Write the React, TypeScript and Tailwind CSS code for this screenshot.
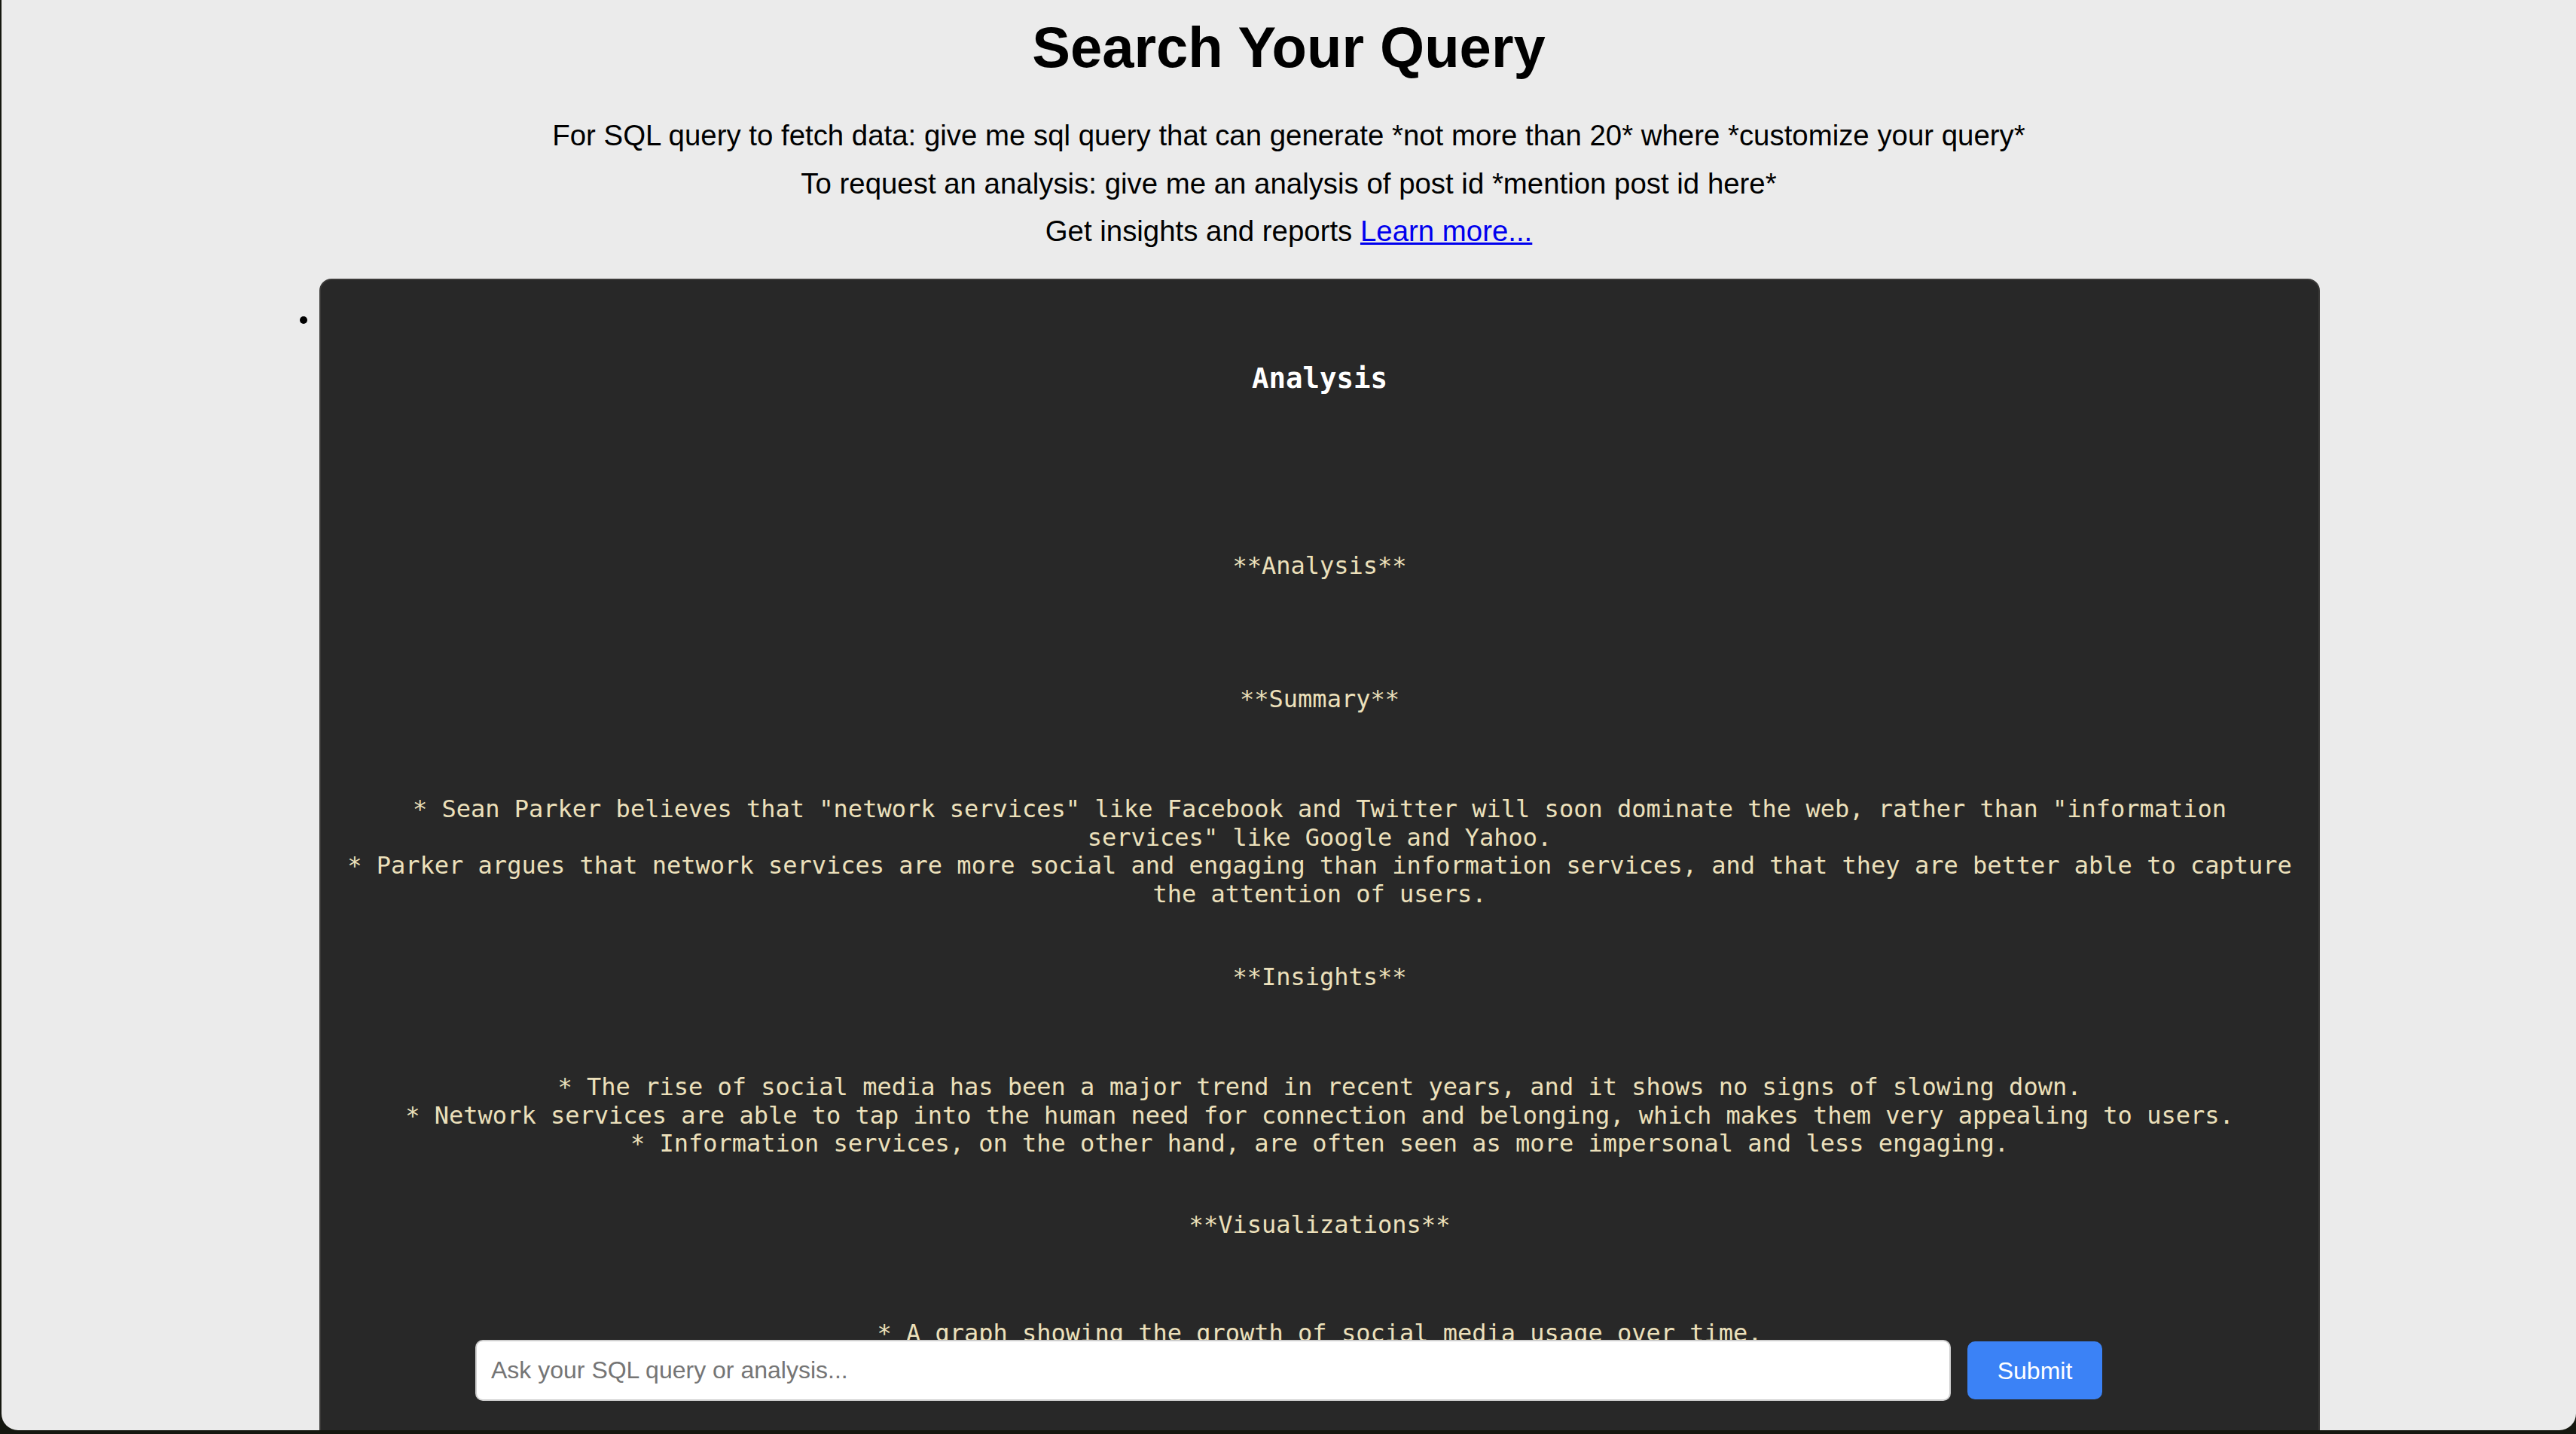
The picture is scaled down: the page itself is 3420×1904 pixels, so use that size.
import React, { useState } from 'react';

const sans = { fontFamily: '"Liberation Sans", Arial, Helvetica, sans-serif' };
const mono = { fontFamily: '"DejaVu Sans Mono", Menlo, "Liberation Mono", monospace' };

const Heading = ({ children, className }: { children: React.ReactNode; className: string }) => (
  <p className={`leading-[37.5px] ${className}`}>{children}</p>
);

export default function App() {
  const [query, setQuery] = useState('');

  return (
    <div className="w-full h-[1904px] bg-[#15170f] overflow-hidden">
      {/* browser window */}
      <div
        className="relative ml-[2px] h-[1899px] bg-[#ebebeb] rounded-b-[22px] overflow-hidden flex flex-col items-center"
        style={sans}
      >
        <h1 className="mt-[19px] text-[76px] leading-[88px] font-bold text-black">Search Your Query</h1>

        <div className="mt-[41px] flex flex-col items-center text-[38.4px] leading-[63.5px] text-black">
          <p>For SQL query to fetch data: give me sql query that can generate *not more than 20* where *customize your query*</p>
          <p>To request an analysis: give me an analysis of post id *mention post id here*</p>
          <p>
            Get insights and reports{' '}
            <a href="#" className="text-[#0000ee] underline">
              Learn more...
            </a>
          </p>
        </div>

        {/* result list */}
        <div className="mt-[31.5px] self-start ml-[396px] flex items-start">
          <span className="mt-[50px] mr-[16px] w-[10px] h-[10px] rounded-full bg-black shrink-0" />
          <div
            className="w-[2656px] h-[1560px] bg-[#282828] border-2 border-[#3a3938] rounded-[16px] px-[32px] text-center text-[32px] text-[#ece0bb]"
            style={mono}
          >
            <h3 className="mt-[108px] text-[37.4px] leading-[44px] font-bold text-white">Analysis</h3>
            <Heading className="mt-[209px]">**Analysis**</Heading>
            <Heading className="mt-[139.5px]">**Summary**</Heading>
            <div className="mt-[108.5px] leading-[37.5px]">
              <p>* Sean Parker believes that "network services" like Facebook and Twitter will soon dominate the web, rather than "information services" like Google and Yahoo.</p>
              <p>* Parker argues that network services are more social and engaging than information services, and that they are better able to capture the attention of users.</p>
            </div>
            <Heading className="mt-[73px]">**Insights**</Heading>
            <div className="mt-[108.5px] leading-[37.5px]">
              <p>* The rise of social media has been a major trend in recent years, and it shows no signs of slowing down.</p>
              <p>* Network services are able to tap into the human need for connection and belonging, which makes them very appealing to users.</p>
              <p>* Information services, on the other hand, are often seen as more impersonal and less engaging.</p>
            </div>
            <Heading className="mt-[70.5px]">**Visualizations**</Heading>
            <Heading className="mt-[106.5px]">* A graph showing the growth of social media usage over time.</Heading>
          </div>
        </div>

        {/* query bar, pinned over the results */}
        <div className="absolute inset-x-0 bottom-[39px] flex justify-center">
          <form
            className="w-[2160px] flex items-center gap-[22px]"
            onSubmit={(e) => e.preventDefault()}
          >
            <input
              value={query}
              onChange={(e) => setQuery(e.target.value)}
              placeholder="Ask your SQL query or analysis..."
              className="flex-1 h-[81px] bg-white border-2 border-[#cfcfcf] rounded-[10px] px-[19px] text-[32px] text-black placeholder:text-[#757575] outline-none"
              style={sans}
            />
            <button
              type="submit"
              className="w-[179px] h-[77px] bg-[#3b82f6] text-white text-[32px] rounded-[10px]"
              style={sans}
            >
              Submit
            </button>
          </form>
        </div>
      </div>
    </div>
  );
}
